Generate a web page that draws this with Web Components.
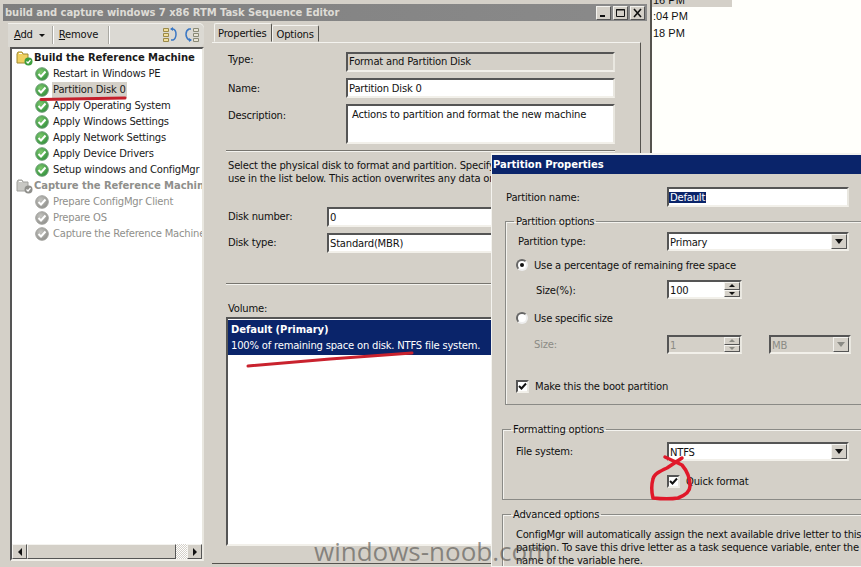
<!DOCTYPE html>
<html>
<head>
<meta charset="utf-8">
<title>Task Sequence Editor</title>
<style>
html, body { margin: 0; height: 100%; overflow: hidden; background: #fff; }
body { font: 10px/13px "DejaVu Sans", sans-serif; letter-spacing: -0.2px; color: #111; }
</style>
</head>
<body>
<desktop-view></desktop-view>

<script>
/* global HTMLElement */

// Small helper, every element below is just a template in an open shadow root
function define (name, html, setup) {
  const template = document.createElement('template')
  template.innerHTML = html
  window.customElements.define(name, class extends HTMLElement {
    constructor () {
      super()
      this.attachShadow({ mode: 'open' }).appendChild(document.importNode(template.content, true))
      if (setup) setup(this, this.shadowRoot)
    }
  })
}

const INSET = 'border: 2px solid; border-color: #555 #e9e7e0 #f2f0ea #555; box-sizing: border-box;'
const RAISED = 'border: 1px solid; border-color: #f4f3ef #555 #555 #f4f3ef; background: #d4d0c8; box-sizing: border-box;'

// Text box. Attributes: disabled, readonly
define('win-field', `
<style>
:host { display: block; height: 20px; font: inherit; ${INSET} background: #fff; padding: 2px 1px 0; white-space: nowrap; overflow: hidden; line-height: 14px; }
:host([readonly]) { background: #d4d0c8; padding-top: 1px; }
:host([disabled]) { background: #d4d0c8; color: #8b8b85; }
</style><slot></slot>`)

define('win-arrow-button', `
<style>
:host { display: flex; align-items: center; justify-content: center; width: 16px; ${RAISED} }
i { border: 4px solid transparent; border-top: 5px solid #111; border-bottom: 0; }
:host([disabled]) i { border-top-color: #8b8b85; }
</style><i></i>`)

define('win-combo', `
<style>
:host { display: flex; height: 19px; ${INSET} background: #fff; line-height: 14px; }
:host([disabled]) { background: #d4d0c8; color: #8b8b85; }
span { flex: 1; padding: 2px 1px 0; overflow: hidden; }
</style><span><slot></slot></span><win-arrow-button></win-arrow-button>`, (el, root) => {
  if (el.hasAttribute('disabled')) root.querySelector('win-arrow-button').setAttribute('disabled', '')
})

define('win-spin', `
<style>
:host { display: flex; width: 75px; height: 19px; ${INSET} background: #fff; line-height: 14px; }
:host([disabled]) { background: #d4d0c8; color: #8b8b85; }
span { flex: 1; padding: 2px 1px 0; }
div { display: flex; flex-direction: column; width: 16px; }
b { flex: 1; display: flex; align-items: center; justify-content: center; ${RAISED} }
i { border: 3px solid transparent; border-bottom: 3px solid #111; border-top: 0; }
b + b i { border-top: 3px solid #111; border-bottom: 0; }
:host([disabled]) i { border-bottom-color: #8b8b85; }
:host([disabled]) b + b i { border-top-color: #8b8b85; border-bottom-color: transparent; }
</style><span><slot></slot></span><div><b><i></i></b><b><i></i></b></div>`)

define('win-radio', `
<style>
:host { display: flex; align-items: center; height: 14px; gap: 6px; }
u { width: 12px; height: 12px; border-radius: 50%; background: #fff; box-sizing: border-box;
  border: 2px solid; border-color: #666 #eee #eee #666; display: flex; align-items: center; justify-content: center; }
:host([checked]) u::after { content: ""; width: 4px; height: 4px; border-radius: 50%; background: #111; }
</style><u></u><slot></slot>`)

define('win-check', `
<style>
:host { display: flex; align-items: center; height: 14px; gap: 6px; }
svg { width: 13px; height: 13px; ${INSET} background: #fff; }
</style><svg viewBox="0 0 9 9"><path d="M1 4l2.500 2.500L8 1.500" fill="none" stroke="#111" stroke-width="2"/></svg><slot></slot>`)

define('win-group', `
<style>
:host { display: block; width: 380px; }
fieldset { margin: 0; padding: 0; border: 1px solid #8a8a86; box-shadow: inset 1px 1px 0 #f4f3ef; }
legend { margin-left: 8px; padding: 0 2px; height: 13px; line-height: 13px; }
</style><fieldset><legend></legend><slot></slot></fieldset>`, (el, root) => {
  root.querySelector('legend').textContent = el.getAttribute('label')
})

// Label + control row, label width comes from the attribute
define('form-row', `
<style>
:host { display: flex; align-items: center; }
label { flex: none; padding-bottom: 1px; }
::slotted(*) { flex: 1; }
</style><label></label><slot></slot>`, (el, root) => {
  const label = root.querySelector('label')
  label.textContent = el.getAttribute('label')
  label.style.width = el.getAttribute('w') + 'px'
  if (el.hasAttribute('dim')) label.style.color = '#8b8b85'
  if (el.hasAttribute('lift')) label.style.paddingBottom = el.getAttribute('lift') + 'px'
  if (el.hasAttribute('drop')) label.style.paddingTop = el.getAttribute('drop') + 'px'
})

// One node of the task sequence tree
define('tree-step', `
<style>
:host { display: flex; align-items: center; height: 16px; padding-left: 23px; white-space: nowrap; color: #1a1a1a; }
:host([group]) { padding-left: 4px; font-weight: bold; letter-spacing: -0.05px; }
:host([off]) { color: #8f8f8b; }
.ic { flex: none; width: 14px; height: 14px; margin-right: 3px; }
:host([group]) .ic { width: 17px; height: 16px; margin-right: 0; }
svg { display: block; width: 100%; height: 100%; }
span { padding: 1px 1px 2px; }
:host([selected]) span { background: #d4d0c8; }
</style>
<div class="ic"></div><span><slot></slot></span>`, (el, root) => {
  const off = el.hasAttribute('off')
  const ic = root.querySelector('.ic')
  if (el.hasAttribute('group')) {
    ic.innerHTML = `<svg viewBox="0 0 17 16">
      <path d="M1 4V13H12V4H7L6 2H2Z" fill="${off ? '#c8c8c4' : '#f0d060'}" stroke="${off ? '#a0a09c' : '#a08a30'}"/>
      <path d="M3 3.500H6" stroke="#fff"/>
      <circle cx="12.500" cy="11.500" r="4" fill="${off ? '#8f8f8b' : '#3d9e3d'}"/>
      <path d="M10.500 11.500l1.500 1.500 2.500-3" fill="none" stroke="#fff" stroke-width="1.200"/></svg>`
  } else {
    ic.innerHTML = `<svg viewBox="0 0 14 14">
      <defs><radialGradient id="g" cx="0.4" cy="0.35" r="0.7">
        <stop offset="0" stop-color="${off ? '#c4c4c0' : '#7cc86c'}"/>
        <stop offset="1" stop-color="${off ? '#8e8e8a' : '#2f8f3a'}"/>
      </radialGradient></defs>
      <circle cx="7" cy="7" r="6.300" fill="url(#g)" stroke="${off ? '#a4a4a0' : '#6f9f78'}"/>
      <path d="M3.500 7l2.500 2.500L10.500 4.500" fill="none" stroke="#fff" stroke-width="2"/></svg>`
  }
})

define('tool-bar', `
<style>
:host { display: flex; align-items: center; height: 24px; padding-left: 6px; background: #dbd9d3; border-radius: 0 5px 5px 0; box-shadow: inset 0 1px 0 #f1f0ec; }
s { width: 1px; height: 18px; background: #aaa9a3; box-shadow: 1px 0 0 #fff; }
span { padding-bottom: 2px; }
u { text-underline-offset: 1px; }
.arrow { border: 3px solid transparent; border-top: 3px solid #111; border-bottom: 0; margin: 1px 7px 0 6px; }
.remove { margin: 0 10px 0 6px; }
svg { width: 16px; height: 18px; }
.fill { flex: 1; }
.last { margin: 0 4px 0 6px; }
</style>
<span class="add"><u>A</u>dd</span><i class="arrow"></i><s></s>
<span class="remove"><u>R</u>emove</span><s></s>
<span class="fill"></span>
<svg viewBox="0 0 16 18">
  <path d="M1.500 2.500h5v3h-5zM1.500 7.500h5v3h-5zM1.500 12.500h5v3h-5z" fill="#f2df9a" stroke="#9a8a4a"/>
  <path d="M9 3h2c4 1 4 9 0 11H9" fill="none" stroke="#3b78c4" stroke-width="1.500"/>
  <path d="M8 3l3-2v4z" fill="#3b78c4"/>
</svg>
<svg class="last" viewBox="0 0 16 18">
  <path d="M9.500 2.500h5v3h-5zM9.500 7.500h5v3h-5zM9.500 12.500h5v3h-5z" fill="#e8e4d4" stroke="#8a8a76"/>
  <path d="M7 3H5C1 5 1 11 5 14h2" fill="none" stroke="#3b78c4" stroke-width="1.500"/>
  <path d="M8 14l-3-2v4z" fill="#3b78c4"/>
</svg>`)

define('h-scroll', `
<style>
:host { display: flex; height: 15px; background: repeating-conic-gradient(#d4d0c8 0 25%, #fff 0 50%) 0 0 / 2px 2px; }
b { width: 15px; display: flex; align-items: center; justify-content: center; ${RAISED} }
i { border: 4px solid transparent; border-right: 4px solid #111; border-left: 0; }
b:last-child i { border-left: 4px solid #111; border-right: 0; }
.thumb { width: 149px; ${RAISED} }
.gap { flex: 1; }
</style><b><i></i></b><div class="thumb"></div><div class="gap"></div><b><i></i></b>`)

define('sequence-tree', `
<style>
:host { display: flex; flex-direction: column; height: 514px; margin-left: 2px; box-sizing: border-box; ${INSET} background: #fff; overflow: hidden; }
.rows { flex: 1; padding-top: 1px; overflow: hidden; }
</style>
<div class="rows">
  <tree-step group>Build the Reference Machine</tree-step>
  <tree-step>Restart in Windows PE</tree-step>
  <tree-step selected>Partition Disk 0</tree-step>
  <tree-step>Apply Operating System</tree-step>
  <tree-step>Apply Windows Settings</tree-step>
  <tree-step>Apply Network Settings</tree-step>
  <tree-step>Apply Device Drivers</tree-step>
  <tree-step>Setup windows and ConfigMgr</tree-step>
  <tree-step group off>Capture the Reference Machine</tree-step>
  <tree-step off>Prepare ConfigMgr Client</tree-step>
  <tree-step off>Prepare OS</tree-step>
  <tree-step off>Capture the Reference Machine</tree-step>
</div>
<h-scroll></h-scroll>`)

define('win-rule', `
<style>
:host { display: block; height: 2px; border-top: 1px solid #77756f; border-bottom: 1px solid #f4f3ef; box-sizing: border-box; }
</style>`)

// Properties tab of the Format and Partition Disk step
define('step-properties', `
<style>
:host { display: block; height: 522px; padding: 9px 25px 0 14px; box-sizing: border-box; border: 1px solid; border-color: #f4f3ef #55534e #55534e transparent; border-left: 0; overflow: hidden; }
form-row { padding-left: 2px; }
.m6 { margin-top: 6px; }
.desc { height: 40px; padding-left: 4px; }
.para { margin: 7px 0 0 2px; white-space: nowrap; }
.list { margin-top: 2px; height: 229px; width: 389px; ${INSET} background: #fff; padding-top: 1px; white-space: nowrap; }
.sel { background: #0a246a; color: #fff; height: 33px; padding: 2px 3px 0; line-height: 16px; }
.sel b { display: block; letter-spacing: -0.05px; }
</style>
<form-row label="Type:" w="118" lift="5"><win-field readonly>Format and Partition Disk</win-field></form-row>
<form-row label="Name:" w="118" class="m6" lift="0" drop="1"><win-field>Partition Disk 0</win-field></form-row>
<form-row label="Description:" w="118" class="m6" drop="5" style="align-items:flex-start"><win-field class="desc">Actions to partition and format the new machine</win-field></form-row>
<win-rule style="margin-top:6px"></win-rule>
<div class="para">Select the physical disk to format and partition. Specify<br>use in the list below. This action overwrites any data on</div>
<form-row label="Disk number:" w="99" style="margin-top:22px"><win-field>0</win-field></form-row>
<form-row label="Disk type:" w="99" class="m6"><win-field>Standard(MBR)</win-field></form-row>
<win-rule style="margin-top:30px"></win-rule>
<div class="para" style="margin-top:17px">Volume:</div>
<div class="list"><div class="sel"><b>Default (Primary)</b>100% of remaining space on disk. NTFS file system.</div></div>`)

define('tab-strip', `
<style>
:host { display: flex; align-items: flex-end; height: 19px; padding-left: 2px; }
span { height: 17px; box-sizing: border-box; padding: 2px 4px 0; border: 1px solid; border-color: #f4f3ef #55534e transparent #f4f3ef; border-radius: 2px 2px 0 0; }
.on { height: 19px; padding: 3px 4px 0 3px; }
</style><span class="on">Properties</span><span>Options</span>`)

define('title-bar', `
<style>
:host { display: flex; align-items: center; height: 17px; margin: 4px 3px 0 3px; background: linear-gradient(90deg, #7f7f7f, #8a8a8a); color: #dedcd6; font-weight: bold; letter-spacing: -0.07px; padding-left: 2px; white-space: nowrap; }
span { flex: 1; }
b { display: flex; align-items: center; justify-content: center; width: 15px; height: 14px; margin-right: 2px; ${RAISED} }
svg { width: 11px; height: 10px; }
</style>
<span><slot></slot></span>
<b><svg viewBox="0 0 11 10"><path d="M2 8h5" stroke="#111" stroke-width="2"/></svg></b>
<b><svg viewBox="0 0 11 10"><path d="M1.500 1.500h8v7h-8z M1 2h9" fill="none" stroke="#111"/></svg></b>
<b><svg viewBox="0 0 11 10"><path d="M2 1l7 8M9 1L2 9" stroke="#111" stroke-width="1.600"/></svg></b>`)

define('editor-window', `
<style>
:host { display: flex; flex-direction: column; width: 652px; height: 567px; flex: none; background: #d4d0c8; border-right: 2px solid #55534e; box-sizing: border-box; overflow: hidden; }
.body { display: flex; margin-top: 2px; gap: 8px; padding-left: 8px; }
.left { width: 196px; flex: none; }
.right { width: 429px; flex: none; }
</style>
<title-bar>build and capture windows 7 x86 RTM Task Sequence Editor</title-bar>
<div class="body">
  <div class="left"><tool-bar></tool-bar><sequence-tree></sequence-tree></div>
  <div class="right"><tab-strip></tab-strip><step-properties></step-properties></div>
</div>`)

define('partition-dialog', `
<style>
:host { position: absolute; left: 491px; top: 153px; width: 380px; height: 414px; background: #d4d0c8; border: 1px solid #f4f3ef; border-right: 0; border-top-width: 2px; box-sizing: border-box; overflow: hidden; white-space: nowrap; }
.title { height: 19px; line-height: 20px; background: #0a246a; color: #fff; font-weight: bold; letter-spacing: -0.05px; padding-left: 1px; }
.body { padding: 13px 0 0 13px; }
.sel { background: #0a246a; color: #fff; margin-left: -1px; padding: 0 1px; }
.pad { padding-left: 12px; }
.pad2 { padding-left: 13px; }
.spin { flex: none; }
.shift { margin-left: -2px; }
.adv { padding-top: 7px; line-height: 13px; letter-spacing: -0.25px; }
</style>
<div class="title">Partition Properties</div>
<div class="body">
  <form-row label="Partition name:" w="161" lift="0" drop="1" style="padding-left:1px;width:343px"><win-field><span class="sel">Default</span></win-field></form-row>
  <win-group label="Partition options" style="margin-top:8px">
    <div class="pad" style="padding-bottom:11px">
      <form-row label="Partition type:" w="149" style="margin-top:4px;width:331px"><win-combo>Primary</win-combo></form-row>
      <win-radio checked class="shift" style="margin-top:7px">Use a percentage of remaining free space</win-radio>
      <form-row label="Size(%):" w="131" lift="0" drop="1" style="margin:8px 0 0 18px"><win-spin class="spin">100</win-spin></form-row>
      <win-radio class="shift" style="margin-top:12px">Use specific size</win-radio>
      <div style="display:flex;margin:10px 0 0 16px;align-items:center">
        <form-row label="Size:" w="133" dim><win-spin class="spin" disabled>1</win-spin></form-row>
        <win-combo disabled style="width:82px;margin-left:27px">MB</win-combo>
      </div>
      <win-check class="shift" style="margin-top:25px">Make this the boot partition</win-check>
    </div>
  </win-group>
  <win-group label="Formatting options" style="margin:18px 0 0 -3px">
    <div class="pad2" style="padding-bottom:11px">
      <form-row label="File system:" w="151" style="margin-top:6px;width:333px"><win-combo>NTFS</win-combo></form-row>
      <win-check style="margin:13px 0 0 151px">Quick format</win-check>
    </div>
  </win-group>
  <win-group label="Advanced options" style="margin:8px 0 0 -3px">
    <div class="pad2 adv">ConfigMgr will automatically assign the next available drive letter to this<br>partition. To save this drive letter as a task sequence variable, enter the<br>name of the variable here.</div>
  </win-group>
</div>`)

// Clock column of the window behind the editor
define('behind-list', `
<style>
:host { flex: 1; background: #fffffb; font-family: "Liberation Sans", sans-serif; font-size: 11px; line-height: 17px; letter-spacing: 0; white-space: nowrap; overflow: hidden; }
.top { width: 79px; height: 7px; background: #d4d0c8; line-height: 1px; }
div { padding-left: 1px; }
</style>
<div class="top">16 PM</div>
<div style="margin-top:1px">:04 PM</div>
<div>18 PM</div>`)

// Red marker strokes and the site watermark, both drawn over the shot
define('shot-overlay', `
<style>
:host { position: absolute; inset: 0; pointer-events: none; }
svg { position: absolute; left: 0; top: 0; width: 861px; height: 567px; }
span { position: absolute; left: 314px; top: 535px; font: 26px/32px "Open Sans", sans-serif; letter-spacing: 0; color: rgba(80, 78, 74, 0.6); white-space: nowrap; }
</style>
<svg viewBox="0 0 861 567" fill="none" stroke-linecap="round" stroke-linejoin="round">
  <path d="M41 99.500L125 98" stroke="#c4202c" stroke-width="3"/>
  <path d="M248 366L330 359L412 353" stroke="#c9222e" stroke-width="3"/>
  <path d="M665 457L682 465M682 458L667 468C660 471 654 474 653 479C651 486 652 494 653 498C662 499 672 499 678 498C686 495 690 491 690 486C690 479 688 472 682 465" stroke="#e0182a" stroke-width="3.500"/>
</svg>
<span>windows-noob.com</span>`)

define('desktop-view', `
<style>
:host { display: flex; position: relative; width: 861px; height: 567px; overflow: hidden; }
</style>
<editor-window></editor-window>
<behind-list></behind-list>
<partition-dialog></partition-dialog>
<shot-overlay></shot-overlay>`)
</script>
</body>
</html>
